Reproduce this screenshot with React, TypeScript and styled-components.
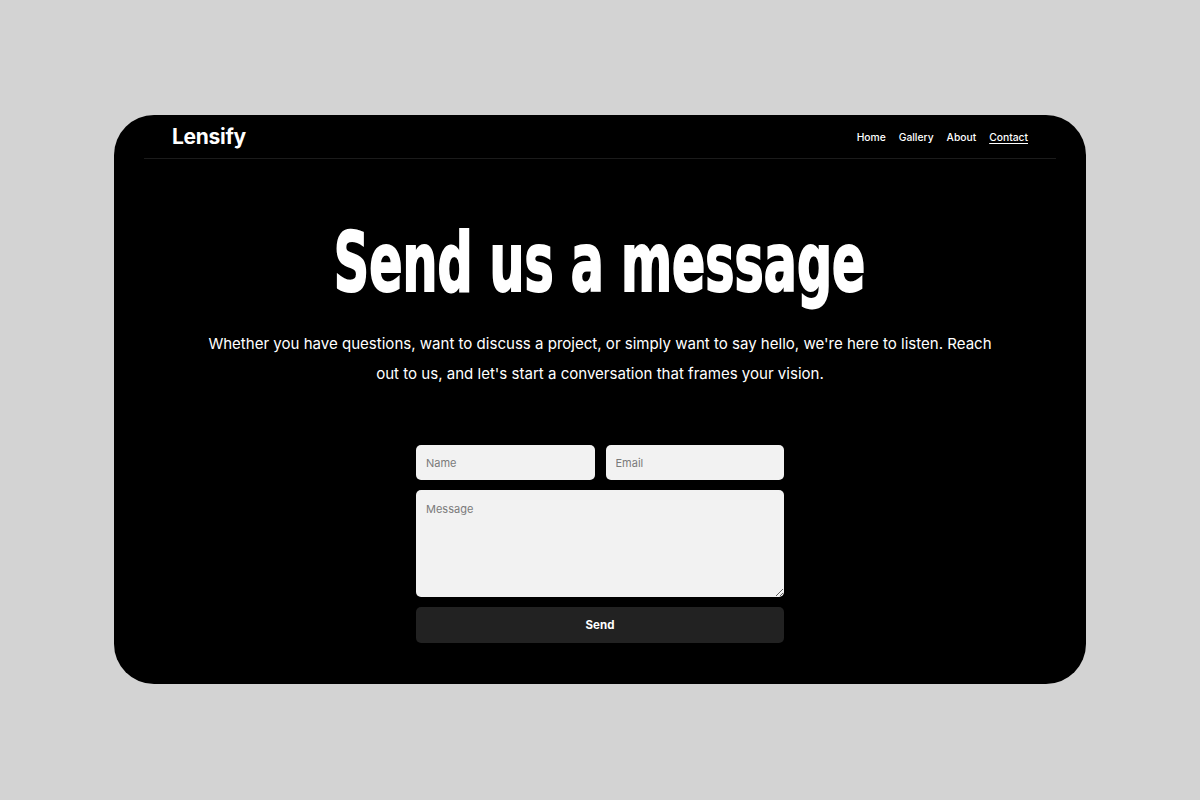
import React from "react";
import styled, { createGlobalStyle } from "styled-components";

const Global = createGlobalStyle`
  html, body { margin: 0; padding: 0; background: #d3d3d3; }
  body { font-family: Inter, "Noto Sans", sans-serif; }
  * { box-sizing: border-box; }
`;

const Page = styled.div`
  width: 1200px;
  height: 800px;
  padding-top: 115px;
  background: #d3d3d3;
`;

const Card = styled.div`
  width: 972px;
  height: 569px;
  margin: 0 auto;
  background: #000;
  border-radius: 40px;
  padding: 0 30px;
  display: flex;
  flex-direction: column;
  align-items: center;
`;

const Header = styled.header`
  width: 100%;
  height: 44px;
  padding: 0 28px;
  border-bottom: 1px solid #1b1b1b;
  display: flex;
  align-items: center;
  justify-content: space-between;
`;

const Logo = styled.div`
  color: #fff;
  font-family: Inter, sans-serif;
  font-weight: 700;
  font-size: 21px;
  letter-spacing: -0.3px;
`;

const Nav = styled.nav`
  display: flex;
  gap: 13px;
`;

const NavLink = styled.a<{ $active?: boolean }>`
  color: #fff;
  font-family: Inter, sans-serif;
  font-size: 10.3px;
  font-weight: 500;
  text-decoration: ${(p) => (p.$active ? "underline" : "none")};
  text-underline-offset: 2px;
  cursor: pointer;
`;

const Heading = styled.h1`
  margin: 62px 0 0;
  color: #fff;
  font-family: "DejaVu Sans Condensed", "Liberation Sans Narrow", "Liberation Sans", sans-serif;
  font-weight: 700;
  font-size: 82px;
  line-height: 84px;
  letter-spacing: 0;
  -webkit-text-stroke: 2px #fff;
  transform: scaleX(0.665);
  white-space: nowrap;
`;

const Lead = styled.p`
  margin: 24px 0 0;
  max-width: 800px;
  color: #fff;
  font-family: Inter, sans-serif;
  font-size: 15.05px;
  line-height: 30px;
  text-align: center;
`;

const Form = styled.form`
  margin-top: 56px;
  width: 368px;
  display: flex;
  flex-direction: column;
  gap: 10px;
`;

const Row = styled.div`
  display: flex;
  gap: 11px;
`;

const Input = styled.input`
  flex: 1;
  min-width: 0;
  height: 35px;
  border: none;
  border-radius: 5px;
  background: #f2f2f2;
  padding: 0 10px;
  font-family: Inter, sans-serif;
  font-size: 11px;
  color: #222;
  outline: none;
  &::placeholder { color: #7a7a7a; }
`;

const TextArea = styled.textarea`
  height: 107px;
  border: none;
  border-radius: 5px;
  background: #f2f2f2;
  padding: 12px 10px;
  font-family: Inter, sans-serif;
  font-size: 11px;
  color: #222;
  resize: vertical;
  outline: none;
  &::placeholder { color: #7a7a7a; }
`;

const Button = styled.button`
  height: 36px;
  border: none;
  border-radius: 5px;
  background: #222;
  color: #fff;
  font-family: Inter, sans-serif;
  font-weight: 700;
  font-size: 11.5px;
  cursor: pointer;
`;

export default function App() {
  return (
    <>
      <Global />
      <Page>
        <Card>
          <Header>
            <Logo>Lensify</Logo>
            <Nav>
              <NavLink>Home</NavLink>
              <NavLink>Gallery</NavLink>
              <NavLink>About</NavLink>
              <NavLink $active>Contact</NavLink>
            </Nav>
          </Header>
          <Heading>Send us a message</Heading>
          <Lead>
            Whether you have questions, want to discuss a project, or simply want to say hello, we're here to listen. Reach out to us, and let's start a conversation that frames your vision.
          </Lead>
          <Form onSubmit={(e) => e.preventDefault()}>
            <Row>
              <Input placeholder="Name" />
              <Input placeholder="Email" />
            </Row>
            <TextArea placeholder="Message" />
            <Button type="submit">Send</Button>
          </Form>
        </Card>
      </Page>
    </>
  );
}
